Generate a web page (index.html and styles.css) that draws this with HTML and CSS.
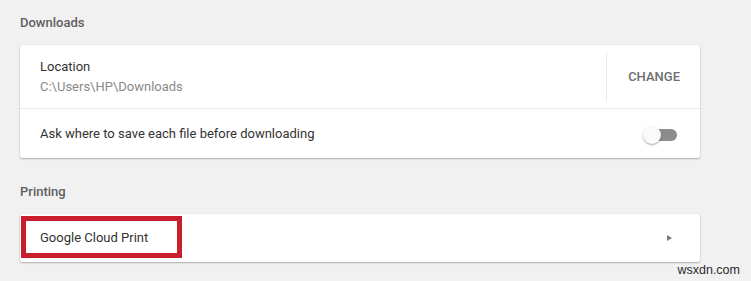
FILE: index.html
```html
<!DOCTYPE html>
<html>
<head>
<meta charset="utf-8">
<link rel="stylesheet" href="styles.css">
</head>
<body>
<main class="page">
  <h2 class="section-title">Downloads</h2>
  <div class="card">
    <div class="row row-location">
      <div class="row-text">
        <div class="label">Location</div>
        <div class="sub">C:\Users\HP\Downloads</div>
      </div>
      <div class="sep"></div>
      <button class="btn">CHANGE</button>
    </div>
    <div class="row row-toggle">
      <div class="label">Ask where to save each file before downloading</div>
      <div class="toggle"><span class="knob"></span></div>
    </div>
  </div>
  <h2 class="section-title second">Printing</h2>
  <div class="card card-print">
    <div class="row row-link">
      <span class="label">Google Cloud Print</span>
      <span class="arrow"></span>
    </div>
    <div class="highlight"></div>
  </div>
</main>
<div class="watermark">wsxdn.com</div>
</body>
</html>
```

FILE: styles.css
```css
html, body {
  margin: 0;
  padding: 0;
}
body {
  background: #f1f1f1;
  font-family: Roboto, "Liberation Sans", Arial, sans-serif;
  width: 751px;
  height: 281px;
  overflow: hidden;
  position: relative;
}
.page {
  padding: 14px 0 0 20px;
  width: 680px;
}
.section-title {
  margin: 0;
  font-size: 13px;
  font-weight: 500;
  line-height: 18px;
  color: #5f5f5f;
}
.section-title.second {
  margin-top: 25px;
}
.card {
  margin-top: 13px;
  background: #fff;
  border-radius: 2px;
  box-shadow: 0 1px 2px rgba(0, 0, 0, 0.28), 0 0 1px rgba(0, 0, 0, 0.12);
}
.row {
  display: flex;
  align-items: center;
  box-sizing: border-box;
}
.label {
  font-size: 13px;
  line-height: 20px;
  color: #333;
}
.sub {
  font-size: 13px;
  line-height: 20px;
  color: #8a8a8a;
}
.row-location {
  height: 64px;
  padding: 0 20px;
  border-bottom: 1px solid #ebebeb;
}
.row-text {
  flex: 1;
}
.sep {
  width: 1px;
  height: 50px;
  background: #ececec;
  margin-right: 21px;
}
.btn {
  border: 0;
  background: none;
  padding: 0;
  font-family: Roboto, "Liberation Sans", Arial, sans-serif;
  font-size: 13px;
  font-weight: 500;
  color: #6e6e6e;
  line-height: 20px;
}
.row-toggle {
  height: 49px;
  padding: 0 23px 0 20px;
  justify-content: space-between;
}
.toggle {
  position: relative;
  width: 30px;
  height: 12px;
  border-radius: 6px;
  background: #8c8c8c;
  margin-top: 2px;
}
.knob {
  position: absolute;
  left: -4px;
  top: -3px;
  width: 18px;
  height: 18px;
  border-radius: 50%;
  background: #fafafa;
  box-shadow: 0 1px 2px rgba(0, 0, 0, 0.35);
}
.card-print {
  position: relative;
}
.row-link {
  height: 48px;
  padding: 0 28px 0 20px;
  justify-content: space-between;
}
.arrow {
  width: 0;
  height: 0;
  border-left: 5px solid #7a7a7a;
  border-top: 3.5px solid transparent;
  border-bottom: 3.5px solid transparent;
}
.highlight {
  position: absolute;
  left: 1px;
  top: 2px;
  width: 161px;
  height: 42px;
  box-sizing: border-box;
  border: 5px solid #c91f2d;
}
.watermark {
  position: absolute;
  right: 11px;
  top: 263px;
  font-family: "Liberation Sans", Arial, sans-serif;
  font-size: 12.5px;
  line-height: 15px;
  color: #2a2a2a;
}
```
